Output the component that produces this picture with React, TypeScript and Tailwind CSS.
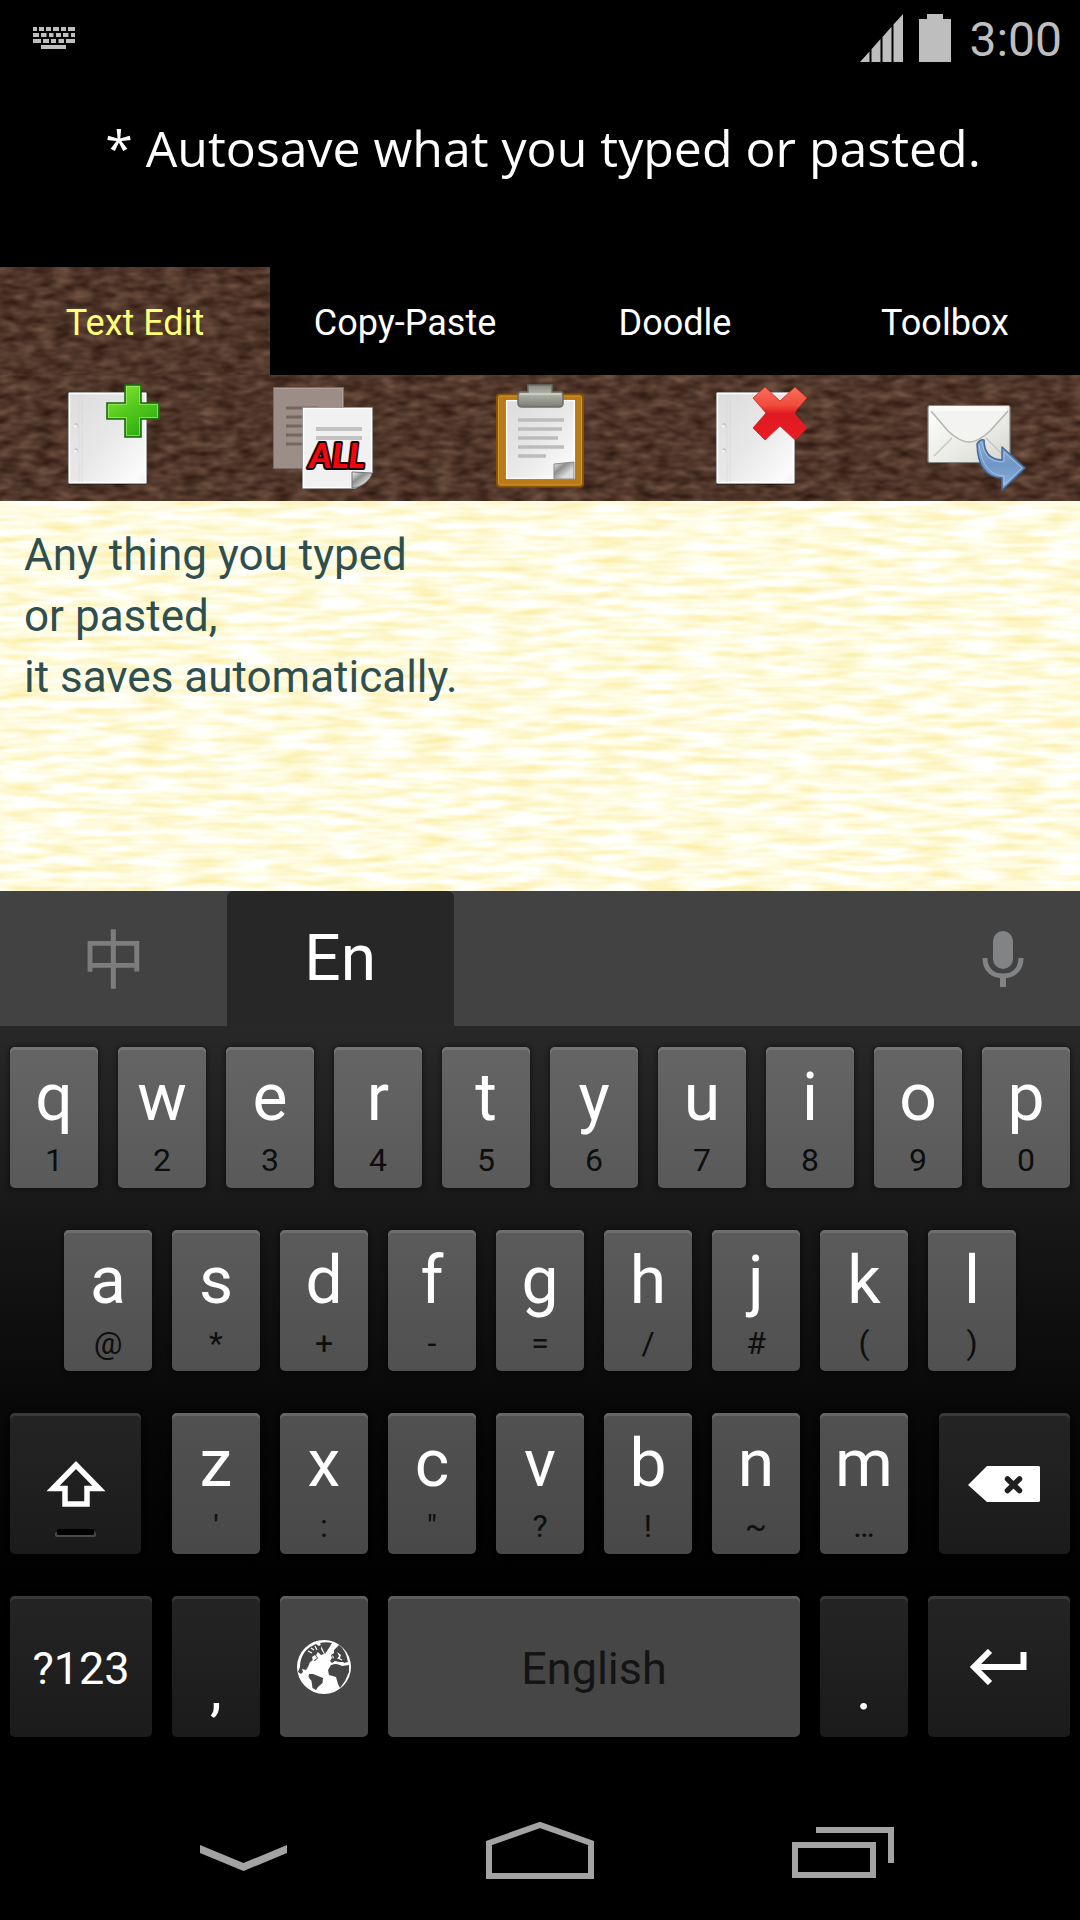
import React, { useState } from "react";

type KeyDef = { label: string; hint: string };

const toKeys = (letters: string, hints: string[]): KeyDef[] =>
  letters.split("").map((label, i) => ({ label, hint: hints[i] }));

const ROW_ONE = toKeys("qwertyuiop", ["1", "2", "3", "4", "5", "6", "7", "8", "9", "0"]);
const ROW_TWO = toKeys("asdfghjkl", ["@", "*", "+", "-", "=", "/", "#", "(", ")"]);
const ROW_THREE = toKeys("zxcvbnm", ["'", ":", '"', "?", "!", "~", "…"]);

/* ---------- textures ---------- */

function Leather({ id, seed }: { id: string; seed: number }) {
  return (
    <svg aria-hidden="true" className="absolute inset-0 h-full w-full">
      <filter id={id} x="0" y="0" width="100%" height="100%" colorInterpolationFilters="sRGB">
        <feTurbulence type="fractalNoise" baseFrequency="0.055 0.12" numOctaves={2} seed={seed} />
        <feColorMatrix values="0.34 0 0 0 0.145  0.3 0 0 0 0.065  0.26 0 0 0 0.035  0 0 0 0 1" />
      </filter>
      <rect width="100%" height="100%" filter={`url(#${id})`} />
    </svg>
  );
}

function Paper() {
  return (
    <svg aria-hidden="true" className="absolute inset-0 h-full w-full">
      <filter id="paper" x="0" y="0" width="100%" height="100%" colorInterpolationFilters="sRGB">
        <feTurbulence type="fractalNoise" baseFrequency="0.022 0.14" numOctaves={2} seed={8} />
        <feColorMatrix values="0.04 0 0 0 0.98  0.14 0 0 0 0.915  0.6 0 0 0 0.58  0 0 0 0 1" />
      </filter>
      <rect width="100%" height="100%" filter="url(#paper)" />
    </svg>
  );
}

/* ---------- status bar icons ---------- */

function KeyboardGlyph() {
  return (
    <svg width="42" height="22" viewBox="0 0 42 22" fill="#bebebe" aria-hidden="true">
      <path d="M0 0h4v4H0zM6 0h5v4H6zM13 0h5v4h-5zM20 0h6v4h-6zM28 0h5v4h-5zM35 0h7v4h-7z" />
      <path d="M0 6h6v4H0zM8 6h5.500v4H8zM16 6h4.500v4H16zM23 6h5v4h-5zM30 6h5.500v4H30zM38 6h4v4h-4z" />
      <path d="M0 12h8v4H0zM10 12h6v4h-6zM18 12h5v4h-5zM25.500 12H31v4h-5.500zM33 12h9v4h-9z" />
      <path d="M8 18h25v4H8z" />
    </svg>
  );
}

function SignalGlyph() {
  return (
    <svg width="43" height="48" viewBox="0 0 43 48" fill="#bebebe" aria-hidden="true">
      <path d="M0 48L9.500 37.400V48zM11.500 35.200L20.500 25V48h-9zM22.500 22.900L31.500 12.800V48h-9zM33.500 10.600L43 0V48h-9.500z" />
    </svg>
  );
}

function BatteryGlyph() {
  return (
    <svg width="32" height="48" viewBox="0 0 32 48" fill="#bebebe" aria-hidden="true">
      <path d="M8 0h16v5h8v43H0V5h8z" />
    </svg>
  );
}

/* ---------- toolbar icons ---------- */

function BlankPage() {
  return (
    <>
      <rect x="14" y="8" width="79" height="93" rx="1" fill="#000" opacity="0.35" />
      <rect x="14.500" y="8.500" width="78" height="91" rx="1" fill="url(#pageFill)" stroke="#8b8b8b" />
      <path d="M15.500 9.500h76v89h-76z" fill="none" stroke="#fff" strokeWidth="1.500" />
      <path d="M25 10v88M28 10v88" stroke="#d9d9d9" strokeWidth="0.800" />
      <circle cx="22" cy="41" r="1.800" fill="#b9b9b9" />
      <circle cx="22" cy="66" r="1.800" fill="#b9b9b9" />
      <circle cx="21.500" cy="42" r="1.500" fill="#f6f6f6" />
      <circle cx="21.500" cy="67" r="1.500" fill="#f6f6f6" />
    </>
  );
}

function SharedGradients() {
  return (
    <svg width="0" height="0" className="absolute" aria-hidden="true">
      <defs>
        <linearGradient id="pageFill" x1="0" y1="0" x2="1" y2="1">
          <stop offset="0" stopColor="#dcdcdc" />
          <stop offset="0.500" stopColor="#e8e8e8" />
          <stop offset="0.900" stopColor="#fbfbfb" />
          <stop offset="1" stopColor="#efefef" />
        </linearGradient>
        <linearGradient id="curl" x1="0" y1="0" x2="1" y2="1">
          <stop offset="0" stopColor="#f4f4f4" />
          <stop offset="0.350" stopColor="#8d8f8c" />
          <stop offset="0.700" stopColor="#dcdcdc" />
        </linearGradient>
      </defs>
    </svg>
  );
}

function NewPageIcon() {
  return (
    <svg width="108" height="108" viewBox="0 0 108 108" aria-hidden="true">
      <defs>
        <linearGradient id="plus" x1="0" y1="0" x2="0.600" y2="1">
          <stop offset="0" stopColor="#8be83a" />
          <stop offset="0.550" stopColor="#52c81c" />
          <stop offset="1" stopColor="#2fae12" />
        </linearGradient>
      </defs>
      <BlankPage />
      <path d="M71 1h16v18h18v16H87v18H71V35H53V19h18z" fill="url(#plus)" stroke="#1f6b0e" strokeWidth="1.600" />
      <path d="M72.500 2.500h13v18h18v13h-18v18h-13v-18h-18v-13h18z" fill="none" stroke="#a4f36a" strokeOpacity="0.650" />
    </svg>
  );
}

function CopyAllIcon() {
  return (
    <svg width="108" height="108" viewBox="0 0 108 108" aria-hidden="true">
      <rect x="3.500" y="3.500" width="70" height="81" fill="#9c8d86" stroke="#7b6c65" />
      <path d="M4.500 4.500h68v79" fill="none" stroke="#ada09a" />
      <path d="M16 24h32M16 33h32M16 42h32M16 51h32M16 60h32" stroke="#75665f" strokeWidth="3" />
      <path d="M33 24h70v65L87 105H33z" fill="#000" opacity="0.300" />
      <path d="M32.500 23.500h70v65L86 104.500H32.500z" fill="#f1f1f1" stroke="#777" />
      <path d="M33.500 24.500h68v64L85 103.500H33.500z" fill="none" stroke="#fff" strokeWidth="1.500" />
      <path d="M46 45h46M46 54h46" stroke="#c2c2c2" strokeWidth="4" />
      <path d="M82 104V88l20 1c-1 7-11 15-20 15z" fill="url(#curl)" stroke="#777" />
      <text
        x="67"
        y="84"
        textAnchor="middle"
        fontSize="34"
        fontStyle="italic"
        fontWeight="900"
        fill="#f4070c"
        stroke="#1a0505"
        strokeWidth="4"
        strokeLinejoin="round"
        paintOrder="stroke"
        className="font-[Lato,sans-serif]"
      >
        ALL
      </text>
    </svg>
  );
}

function ClipboardIcon() {
  return (
    <svg width="108" height="108" viewBox="0 0 108 108" aria-hidden="true">
      <defs>
        <linearGradient id="clip" x1="0" y1="0" x2="0" y2="1">
          <stop offset="0" stopColor="#85877e" />
          <stop offset="0.400" stopColor="#b2b4aa" />
          <stop offset="1" stopColor="#7b7d74" />
        </linearGradient>
      </defs>
      <rect x="11" y="10.500" width="86" height="92" rx="3" fill="#b97a18" stroke="#8a5503" strokeWidth="2" />
      <rect x="12.500" y="12" width="83" height="89" rx="2" fill="none" stroke="#d09637" />
      <path d="M19.500 15.500h70v80h-70z" fill="url(#pageFill)" stroke="#7c5a2a" />
      <path d="M20.500 16.500h68v78h-68z" fill="none" stroke="#fff" strokeWidth="1.500" />
      <path d="M32 36h46M32 45h44M32 54h40M32 63h46M32 72h28" stroke="#bcbcbc" strokeWidth="3.500" />
      <path d="M68 95V80l20-2v17z" fill="url(#curl)" stroke="#8b8b8b" />
      <path d="M42 1h24v7h9q2 0 2 3v8q0 4-4 4H36q-4 0-4-4v-8q0-3 2-3h8z" fill="url(#clip)" stroke="#6b6d65" strokeWidth="1.500" />
      <path d="M34 10h41" stroke="#d3d5cb" strokeWidth="1.500" />
    </svg>
  );
}

function DeletePageIcon() {
  return (
    <svg width="108" height="108" viewBox="0 0 108 108" aria-hidden="true">
      <defs>
        <linearGradient id="cross" x1="0" y1="0" x2="0" y2="1">
          <stop offset="0" stopColor="#f9705c" />
          <stop offset="0.350" stopColor="#f04a3c" />
          <stop offset="0.500" stopColor="#e01a20" />
          <stop offset="1" stopColor="#e81c24" />
        </linearGradient>
      </defs>
      <BlankPage />
      <path
        d="M63 3L78 17 93 3l12 11-13 15 13 15-12 12-15-14-15 14-12-12 13-15-13-15z"
        fill="url(#cross)"
        stroke="#c9252a"
        strokeWidth="0.800"
        strokeLinejoin="round"
      />
    </svg>
  );
}

function SendMailIcon() {
  return (
    <svg width="108" height="108" viewBox="0 0 108 108" aria-hidden="true">
      <defs>
        <linearGradient id="mail" x1="0" y1="0" x2="1" y2="1">
          <stop offset="0" stopColor="#fff" />
          <stop offset="0.600" stopColor="#e9e9e5" />
          <stop offset="1" stopColor="#d3d3ce" />
        </linearGradient>
        <linearGradient id="send" x1="0" y1="0" x2="0" y2="1">
          <stop offset="0" stopColor="#86a9d2" />
          <stop offset="0.500" stopColor="#6f97c6" />
          <stop offset="1" stopColor="#8fb2db" />
        </linearGradient>
      </defs>
      <rect x="10" y="21.500" width="82" height="57" rx="2" fill="url(#mail)" stroke="#85857f" strokeWidth="1.200" />
      <path d="M16 72l18-18M86 72L68 54" stroke="#c3c3bd" strokeWidth="1.300" fill="none" />
      <path d="M13 27l17 20q12 11 21 11t21-11l18-20" fill="#f3f3f1" stroke="#b4b4ae" strokeWidth="1.500" />
      <path d="M13 23h76v4H13z" fill="#fafafa" />
      <path
        d="M59 60q3-5 7-4 0 19 18 20V63l23 21-23 22V94Q60 93 59 60z"
        fill="url(#send)"
        stroke="#44699c"
        strokeWidth="1.500"
        strokeLinejoin="round"
      />
      <path d="M61 61q4 30 25 31v9l18-17-18-16v10q-20 1-22-20" fill="none" stroke="#b7d0ee" strokeOpacity="0.700" />
    </svg>
  );
}

/* ---------- keyboard icons ---------- */

function MicGlyph() {
  return (
    <svg width="42" height="56" viewBox="0 0 42 56" aria-hidden="true">
      <rect x="11" y="0" width="20" height="38" rx="10" fill="#828385" />
      <path d="M3 27c0 12 8 18 18 18s18-6 18-18" fill="none" stroke="#828385" strokeWidth="5" />
      <path d="M18 44h6v12h-6z" fill="#828385" />
    </svg>
  );
}

function ShiftGlyph() {
  return (
    <svg width="62" height="78" viewBox="0 0 62 78" aria-hidden="true">
      <path d="M31 4L54 27.500H42V43H20V27.500H8z" fill="none" stroke="#fff" strokeWidth="5.500" />
      <rect x="10" y="71" width="41" height="5" rx="2" fill="#4a4a4a" />
      <rect x="12" y="68" width="37" height="6" rx="1" fill="#000" />
    </svg>
  );
}

function BackspaceGlyph() {
  return (
    <svg width="72" height="36" viewBox="0 0 72 36" aria-hidden="true">
      <path d="M19 0h52l1 1v34l-1 1H19L0 19z" fill="#fff" />
      <path d="M39.500 13l12 11.500M51.500 13l-12 11.500" stroke="#202020" strokeWidth="5.500" strokeLinecap="round" />
    </svg>
  );
}

function GlobeGlyph() {
  return (
    <svg width="54" height="54" viewBox="0 0 54 54" aria-hidden="true">
      <circle cx="27" cy="27" r="27" fill="#fff" />
      <g fill="#464646">
        <path d="M3 27C3 18 7 11 13 7l6-3 3 2 3-2-1 5 3 5-3 1-3-3-2 3 2 3-3 3-2-1-3 2-2 5-2 3-4-1 1 3-2 2-3-2z" />
        <path d="M23 3q6-1.500 12 0l-3 5-4 6-2-4z" />
        <path d="M12 34h4l5 2 5 2-.5 5-4.500 4-2 3-3.500-2-1-7-3-4z" />
        <path d="M37 10l5-5q7 5 9 17l-4 1-5-1-4-1-3 2-2-2 2-3-1-3 3-2z" />
        <path d="M31 30l3-5 6-1.500 5 2.500 7-1v7l-4 9-5 7-2-4-2-7-7-2z" />
      </g>
      <path d="M35 24l5-2h7l-3 3-5-1zM15 17l3-2 2 3-4 3zM40 12l2 4-2 3 3-1 1-3zM35 15l2 2-1 2z" fill="#fff" />
      <path d="M11 11l4 2M14 8l3 2M18 6l2 4M45 20l-4-2" stroke="#fff" strokeWidth="1.200" />
    </svg>
  );
}

function EnterGlyph() {
  return (
    <svg width="58" height="36" viewBox="0 0 58 36" aria-hidden="true">
      <path d="M20 2L4 18l16 16M4 18h49.500V3" fill="none" stroke="#fff" strokeWidth="6" />
    </svg>
  );
}

/* ---------- keys ---------- */

const KEY_TONES = {
  one: "from-[#656565] to-[#595959] shadow-[inset_0_3px_0_#757575,0_0_4px_1px_rgba(0,0,0,0.45)]",
  two: "from-[#5b5b5b] to-[#505050] shadow-[inset_0_3px_0_#6d6d6d,0_0_4px_1px_rgba(0,0,0,0.45)]",
  three: "from-[#515151] to-[#484848] shadow-[inset_0_3px_0_#666666,0_0_4px_1px_rgba(0,0,0,0.45)]",
  four: "from-[#464646] to-[#464646] shadow-[inset_0_3px_0_#5e5e5e,0_0_4px_1px_rgba(0,0,0,0.45)]",
  dark: "from-[#242424] to-[#1b1b1b] shadow-[inset_0_3px_0_#393939,0_0_4px_1px_rgba(0,0,0,0.45)]",
};

type Tone = keyof typeof KEY_TONES;

function KeyShell({
  tone,
  label,
  width,
  children,
}: {
  tone: Tone;
  label: string;
  width: string;
  children: React.ReactNode;
}) {
  return (
    <div className={`${width} px-[10px]`}>
      <button
        type="button"
        aria-label={label}
        className={`flex h-[141px] w-full flex-col items-center justify-center rounded-[5px] bg-gradient-to-b ${KEY_TONES[tone]}`}
      >
        {children}
      </button>
    </div>
  );
}

function LetterKey({ def, tone, width }: { def: KeyDef; tone: Tone; width: string }) {
  return (
    <KeyShell tone={tone} label={def.label} width={width}>
      <span className="text-[66px] leading-[84px] text-white">{def.label}</span>
      <span className="text-[32px] leading-[40px] text-[#0e0e0e]">{def.hint}</span>
    </KeyShell>
  );
}

/* ---------- page ---------- */

const TABS = ["Text Edit", "Copy-Paste", "Doodle", "Toolbox"];

const TOOLS = [
  { label: "New note", icon: <NewPageIcon /> },
  { label: "Copy all", icon: <CopyAllIcon /> },
  { label: "Paste", icon: <ClipboardIcon /> },
  { label: "Delete note", icon: <DeletePageIcon /> },
  { label: "Send by mail", icon: <SendMailIcon /> },
];

export default function App() {
  const [tab, setTab] = useState(TABS[0]);
  const [text, setText] = useState("Any thing you typed\nor pasted,\nit saves automatically.");

  return (
    <div className="flex min-h-screen w-full flex-col bg-black font-[Roboto,sans-serif]">
      <SharedGradients />

      <div className="flex h-[75px] items-center justify-between pl-[33px] pr-[18px]">
        <KeyboardGlyph />
        <div className="flex items-center gap-4">
          <SignalGlyph />
          <BatteryGlyph />
          <span className="pl-0.5 pt-1 text-[48px] leading-[56px] text-[#bebebe]">3:00</span>
        </div>
      </div>

      <header className="h-[192px] pl-1.5 pt-[37px] text-center">
        <h1 className="font-['Open_Sans',sans-serif] text-[50px] leading-[72px] text-white">
          * Autosave what you typed or pasted.
        </h1>
      </header>

      <nav className="grid grid-cols-4" role="tablist">
        {TABS.map((name) => (
          <button
            key={name}
            type="button"
            role="tab"
            aria-selected={tab === name}
            onClick={() => setTab(name)}
            className={`relative h-[108px] pt-1 text-[36px] leading-[42px] ${
              tab === name ? "text-[#ffff7a]" : "text-white"
            }`}
          >
            {tab === name && <Leather id="leatherTab" seed={4} />}
            <span className="relative">{name}</span>
          </button>
        ))}
      </nav>

      <div className="relative">
        <Leather id="leatherBar" seed={11} />
        <div className="relative grid h-[126px] grid-cols-5 items-center">
          {TOOLS.map((tool) => (
            <button key={tool.label} type="button" aria-label={tool.label} className="flex justify-center">
              {tool.icon}
            </button>
          ))}
        </div>
      </div>

      <main className="relative flex flex-1 flex-col">
        <Paper />
        <textarea
          aria-label="Note text"
          spellCheck={false}
          value={text}
          onChange={(e) => setText(e.target.value)}
          className="relative min-h-[390px] w-full flex-1 resize-none px-6 pt-6 text-[44px] leading-[61px] text-[#2f4f4f] outline-none"
        />
      </main>

      <section aria-label="Keyboard">
        <div className="flex h-[135px] bg-[#424242]">
          <button
            type="button"
            className="w-[21%] pb-2 font-['Noto_Sans_CJK_SC',sans-serif] text-[64px] font-normal text-[#7c7c7c]"
          >
            中
          </button>
          <button type="button" className="w-[21%] rounded-t-[6px] bg-[#272727] text-[64px] text-white">
            En
          </button>
          <button type="button" aria-label="Voice input" className="ml-auto pr-[56px]">
            <MicGlyph />
          </button>
        </div>

        <div className="flex flex-col gap-[42px] bg-gradient-to-b from-[#282828] to-black pb-[39px] pt-[21px]">
          <div className="flex">
            {ROW_ONE.map((k) => (
              <LetterKey key={k.label} def={k} tone="one" width="w-[10%]" />
            ))}
          </div>
          <div className="flex justify-center">
            {ROW_TWO.map((k) => (
              <LetterKey key={k.label} def={k} tone="two" width="w-[10%]" />
            ))}
          </div>
          <div className="flex justify-between">
            <KeyShell tone="dark" label="Shift" width="w-[14%]">
              <span className="pt-8">
                <ShiftGlyph />
              </span>
            </KeyShell>
            <div className="flex w-[70%]">
              {ROW_THREE.map((k) => (
                <LetterKey key={k.label} def={k} tone="three" width="w-[14.2857%]" />
              ))}
            </div>
            <KeyShell tone="dark" label="Backspace" width="w-[14%]">
              <BackspaceGlyph />
            </KeyShell>
          </div>
          <div className="flex">
            <KeyShell tone="dark" label="Symbols" width="w-[15%]">
              <span className="pt-1 text-[45px] leading-[52px] text-white">?123</span>
            </KeyShell>
            <KeyShell tone="dark" label="Comma" width="w-[10%]">
              <span className="pt-11 text-[60px] leading-[70px] text-white">,</span>
            </KeyShell>
            <KeyShell tone="four" label="Change language" width="w-[10%]">
              <GlobeGlyph />
            </KeyShell>
            <KeyShell tone="four" label="Space" width="w-[40%]">
              <span className="pt-1 text-[45px] leading-[52px] text-[#141414]">English</span>
            </KeyShell>
            <KeyShell tone="dark" label="Period" width="w-[10%]">
              <span className="pt-11 text-[60px] leading-[70px] text-white">.</span>
            </KeyShell>
            <KeyShell tone="dark" label="Enter" width="w-[15%]">
              <EnterGlyph />
            </KeyShell>
          </div>
        </div>
      </section>

      <footer className="flex h-[144px] items-center justify-center">
        <button type="button" aria-label="Hide keyboard" className="flex w-[297px] justify-center pt-5">
          <svg width="87" height="26" viewBox="0 0 87 26" fill="#a3a3a3" aria-hidden="true">
            <path d="M0 0l43.500 18L87 0v8L43.500 26 0 8z" />
          </svg>
        </button>
        <button type="button" aria-label="Home" className="flex w-[297px] justify-center pt-1">
          <svg width="108" height="58" viewBox="0 0 108 58" aria-hidden="true">
            <path d="M3 55V22L54 4l51 18v33z" fill="none" stroke="#a3a3a3" strokeWidth="6" />
          </svg>
        </button>
        <button type="button" aria-label="Recent apps" className="flex w-[297px] justify-center pl-3 pt-2">
          <svg width="102" height="51" viewBox="0 0 102 51" aria-hidden="true">
            <path d="M3 18h78v30H3zM24 3h75v33" fill="none" stroke="#a3a3a3" strokeWidth="6" />
          </svg>
        </button>
      </footer>
    </div>
  );
}
